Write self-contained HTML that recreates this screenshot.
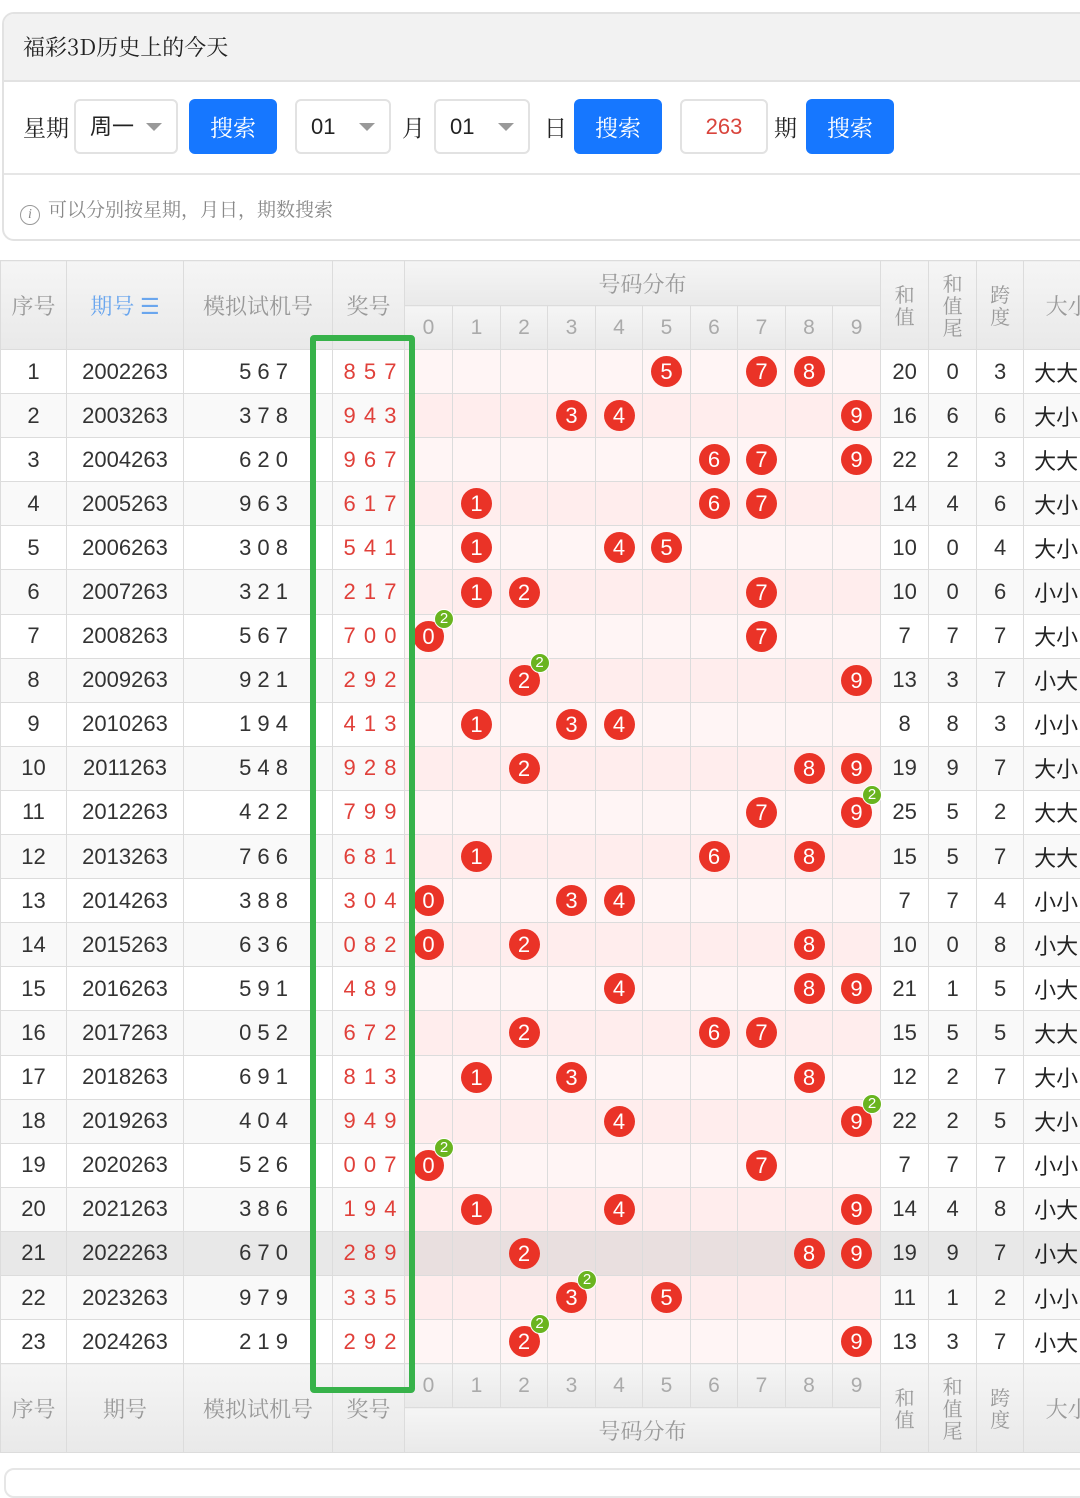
<!DOCTYPE html>
<html><head><meta charset="utf-8"><style>
*{box-sizing:border-box;margin:0;padding:0}
body{width:1080px;height:1480px;overflow:hidden;background:#fff;font-family:"Liberation Sans","Noto Sans CJK SC",sans-serif;position:relative}
.card{position:absolute;left:2px;top:12px;width:1100px;height:229px;border:2px solid #e2e2e2;border-radius:12px;overflow:hidden}
.ch{height:68px;background:#f2f2f2;border-bottom:2px solid #e2e2e2;font:22px "Noto Serif CJK SC",serif;color:#222;padding:17px 0 0 19px}
.ctl{height:93px;border-bottom:2px solid #e6e6e6;position:relative}
.ctl>*{position:absolute;top:17px;height:55px}
.lab{font:23px "Noto Serif CJK SC",serif;color:#222;line-height:55px}
.sel{border:2px solid #e2e2e2;border-radius:6px;font-size:22px;color:#222;line-height:51px;padding-left:14px}
.sel.ar:after{content:"";position:absolute;right:14px;top:22px;border:8px solid transparent;border-top:8px solid #999;border-bottom:0}
.btn{background:#1677ff;border-radius:6px;color:#fff;font:23px "Noto Serif CJK SC",serif;text-align:center;line-height:55px}
.hint{padding:20px 0 0 16px;font:19px "Noto Serif CJK SC",serif;color:#888}
.hint i{display:inline-block;width:20px;height:20px;border:1.5px solid #999;border-radius:50%;font:italic 14px "Liberation Serif",serif;text-align:center;line-height:17px;margin-right:8px;vertical-align:-2px}
table{position:absolute;left:0;top:260px;border-collapse:collapse;table-layout:fixed;width:1110px}
td,th{border:1px solid #dcdcdc;text-align:center;padding:0;font-weight:normal;white-space:nowrap;overflow:visible}
th{background:linear-gradient(#f5f5f5,#e9e9e9);color:#999;font:22px "Noto Serif CJK SC",serif}
th.d{font:21px "Liberation Sans",sans-serif;color:#aaa;height:44px}
th.v{font-size:20px;line-height:22px}
tbody td{height:44.1px;font-size:22px;color:#333}
tbody tr:nth-child(odd) td{background:#fff}
tbody tr:nth-child(even) td{background:#f9f9f9}
tbody tr:nth-child(odd) td.p{background:#fff5f5}
tbody tr:nth-child(even) td.p{background:#ffeded}
tbody tr.hl td{background:#e8e8e8!important}
tbody tr.hl td.p{background:#e9dfdf!important}
td.r{color:#e0403a;letter-spacing:1px;padding-left:4px}
td.s{letter-spacing:0;text-align:right;padding-right:44px}
td.b{font-family:"Noto Sans CJK SC",sans-serif;color:#222;text-align:left;padding-left:10px}
.ball{display:inline-block;position:relative;width:31px;height:31px;border-radius:50%;background:#ea3327;color:#fff;font-size:22px;line-height:31px;vertical-align:middle}
.ball b{position:absolute;right:-10px;top:-12px;width:20px;height:20px;border-radius:50%;background:#6ab41f;color:#fff;font-size:15px;line-height:18px;font-weight:normal;border:1px solid #fff}
.gb{position:absolute;left:310px;top:335px;width:105px;height:1058px;border:6px solid #37b24a;border-radius:4px}
.bot{position:absolute;left:4px;top:1468px;width:1100px;height:30px;border:2px solid #e6e6e6;border-radius:10px}
</style></head><body>
<div class="card">
<div class="ch">福彩3D历史上的今天</div>
<div class="ctl">
<span class="lab" style="left:19px">星期</span>
<div class="sel ar" style="left:70px;width:104px">周一</div>
<div class="btn" style="left:185px;width:88px">搜索</div>
<div class="sel ar" style="left:291px;width:96px">01</div>
<span class="lab" style="left:398px">月</span>
<div class="sel ar" style="left:430px;width:96px">01</div>
<span class="lab" style="left:540px">日</span>
<div class="btn" style="left:570px;width:88px">搜索</div>
<div class="sel" style="left:676px;width:88px;color:#d9443c;text-align:center;padding:0">263</div>
<span class="lab" style="left:770px">期</span>
<div class="btn" style="left:802px;width:88px">搜索</div>
</div>
<div class="hint"><i>i</i>可以分别按星期，月日，期数搜索</div>
</div>

<table>
<colgroup><col style="width:66px"><col style="width:117px"><col style="width:149px"><col style="width:72px"><col style="width:48px"><col style="width:48px"><col style="width:47px"><col style="width:48px"><col style="width:47px"><col style="width:48px"><col style="width:47px"><col style="width:48px"><col style="width:47px"><col style="width:48px"><col style="width:48px"><col style="width:48px"><col style="width:47px"><col style="width:88px"></colgroup>
<thead>
<tr style="height:45px"><th rowspan="2">序号</th><th rowspan="2" style="color:#6aa6ee">期号 ☰</th><th rowspan="2">模拟试机号</th><th rowspan="2">奖号</th><th colspan="10">号码分布</th><th rowspan="2" class="v">和<br>值</th><th rowspan="2" class="v">和<br>值<br>尾</th><th rowspan="2" class="v">跨<br>度</th><th rowspan="2">大小</th></tr>
<tr><th class="d">0</th><th class="d">1</th><th class="d">2</th><th class="d">3</th><th class="d">4</th><th class="d">5</th><th class="d">6</th><th class="d">7</th><th class="d">8</th><th class="d">9</th></tr>
</thead>
<tbody>
<tr><td>1</td><td>2002263</td><td class="s">5 6 7</td><td class="r">8 5 7</td><td class="p"></td><td class="p"></td><td class="p"></td><td class="p"></td><td class="p"></td><td class="p"><span class="ball">5</span></td><td class="p"></td><td class="p"><span class="ball">7</span></td><td class="p"><span class="ball">8</span></td><td class="p"></td><td>20</td><td>0</td><td>3</td><td class="b">大大</td></tr>
<tr><td>2</td><td>2003263</td><td class="s">3 7 8</td><td class="r">9 4 3</td><td class="p"></td><td class="p"></td><td class="p"></td><td class="p"><span class="ball">3</span></td><td class="p"><span class="ball">4</span></td><td class="p"></td><td class="p"></td><td class="p"></td><td class="p"></td><td class="p"><span class="ball">9</span></td><td>16</td><td>6</td><td>6</td><td class="b">大小</td></tr>
<tr><td>3</td><td>2004263</td><td class="s">6 2 0</td><td class="r">9 6 7</td><td class="p"></td><td class="p"></td><td class="p"></td><td class="p"></td><td class="p"></td><td class="p"></td><td class="p"><span class="ball">6</span></td><td class="p"><span class="ball">7</span></td><td class="p"></td><td class="p"><span class="ball">9</span></td><td>22</td><td>2</td><td>3</td><td class="b">大大</td></tr>
<tr><td>4</td><td>2005263</td><td class="s">9 6 3</td><td class="r">6 1 7</td><td class="p"></td><td class="p"><span class="ball">1</span></td><td class="p"></td><td class="p"></td><td class="p"></td><td class="p"></td><td class="p"><span class="ball">6</span></td><td class="p"><span class="ball">7</span></td><td class="p"></td><td class="p"></td><td>14</td><td>4</td><td>6</td><td class="b">大小</td></tr>
<tr><td>5</td><td>2006263</td><td class="s">3 0 8</td><td class="r">5 4 1</td><td class="p"></td><td class="p"><span class="ball">1</span></td><td class="p"></td><td class="p"></td><td class="p"><span class="ball">4</span></td><td class="p"><span class="ball">5</span></td><td class="p"></td><td class="p"></td><td class="p"></td><td class="p"></td><td>10</td><td>0</td><td>4</td><td class="b">大小</td></tr>
<tr><td>6</td><td>2007263</td><td class="s">3 2 1</td><td class="r">2 1 7</td><td class="p"></td><td class="p"><span class="ball">1</span></td><td class="p"><span class="ball">2</span></td><td class="p"></td><td class="p"></td><td class="p"></td><td class="p"></td><td class="p"><span class="ball">7</span></td><td class="p"></td><td class="p"></td><td>10</td><td>0</td><td>6</td><td class="b">小小</td></tr>
<tr><td>7</td><td>2008263</td><td class="s">5 6 7</td><td class="r">7 0 0</td><td class="p"><span class="ball">0<b>2</b></span></td><td class="p"></td><td class="p"></td><td class="p"></td><td class="p"></td><td class="p"></td><td class="p"></td><td class="p"><span class="ball">7</span></td><td class="p"></td><td class="p"></td><td>7</td><td>7</td><td>7</td><td class="b">大小</td></tr>
<tr><td>8</td><td>2009263</td><td class="s">9 2 1</td><td class="r">2 9 2</td><td class="p"></td><td class="p"></td><td class="p"><span class="ball">2<b>2</b></span></td><td class="p"></td><td class="p"></td><td class="p"></td><td class="p"></td><td class="p"></td><td class="p"></td><td class="p"><span class="ball">9</span></td><td>13</td><td>3</td><td>7</td><td class="b">小大</td></tr>
<tr><td>9</td><td>2010263</td><td class="s">1 9 4</td><td class="r">4 1 3</td><td class="p"></td><td class="p"><span class="ball">1</span></td><td class="p"></td><td class="p"><span class="ball">3</span></td><td class="p"><span class="ball">4</span></td><td class="p"></td><td class="p"></td><td class="p"></td><td class="p"></td><td class="p"></td><td>8</td><td>8</td><td>3</td><td class="b">小小</td></tr>
<tr><td>10</td><td>2011263</td><td class="s">5 4 8</td><td class="r">9 2 8</td><td class="p"></td><td class="p"></td><td class="p"><span class="ball">2</span></td><td class="p"></td><td class="p"></td><td class="p"></td><td class="p"></td><td class="p"></td><td class="p"><span class="ball">8</span></td><td class="p"><span class="ball">9</span></td><td>19</td><td>9</td><td>7</td><td class="b">大小</td></tr>
<tr><td>11</td><td>2012263</td><td class="s">4 2 2</td><td class="r">7 9 9</td><td class="p"></td><td class="p"></td><td class="p"></td><td class="p"></td><td class="p"></td><td class="p"></td><td class="p"></td><td class="p"><span class="ball">7</span></td><td class="p"></td><td class="p"><span class="ball">9<b>2</b></span></td><td>25</td><td>5</td><td>2</td><td class="b">大大</td></tr>
<tr><td>12</td><td>2013263</td><td class="s">7 6 6</td><td class="r">6 8 1</td><td class="p"></td><td class="p"><span class="ball">1</span></td><td class="p"></td><td class="p"></td><td class="p"></td><td class="p"></td><td class="p"><span class="ball">6</span></td><td class="p"></td><td class="p"><span class="ball">8</span></td><td class="p"></td><td>15</td><td>5</td><td>7</td><td class="b">大大</td></tr>
<tr><td>13</td><td>2014263</td><td class="s">3 8 8</td><td class="r">3 0 4</td><td class="p"><span class="ball">0</span></td><td class="p"></td><td class="p"></td><td class="p"><span class="ball">3</span></td><td class="p"><span class="ball">4</span></td><td class="p"></td><td class="p"></td><td class="p"></td><td class="p"></td><td class="p"></td><td>7</td><td>7</td><td>4</td><td class="b">小小</td></tr>
<tr><td>14</td><td>2015263</td><td class="s">6 3 6</td><td class="r">0 8 2</td><td class="p"><span class="ball">0</span></td><td class="p"></td><td class="p"><span class="ball">2</span></td><td class="p"></td><td class="p"></td><td class="p"></td><td class="p"></td><td class="p"></td><td class="p"><span class="ball">8</span></td><td class="p"></td><td>10</td><td>0</td><td>8</td><td class="b">小大</td></tr>
<tr><td>15</td><td>2016263</td><td class="s">5 9 1</td><td class="r">4 8 9</td><td class="p"></td><td class="p"></td><td class="p"></td><td class="p"></td><td class="p"><span class="ball">4</span></td><td class="p"></td><td class="p"></td><td class="p"></td><td class="p"><span class="ball">8</span></td><td class="p"><span class="ball">9</span></td><td>21</td><td>1</td><td>5</td><td class="b">小大</td></tr>
<tr><td>16</td><td>2017263</td><td class="s">0 5 2</td><td class="r">6 7 2</td><td class="p"></td><td class="p"></td><td class="p"><span class="ball">2</span></td><td class="p"></td><td class="p"></td><td class="p"></td><td class="p"><span class="ball">6</span></td><td class="p"><span class="ball">7</span></td><td class="p"></td><td class="p"></td><td>15</td><td>5</td><td>5</td><td class="b">大大</td></tr>
<tr><td>17</td><td>2018263</td><td class="s">6 9 1</td><td class="r">8 1 3</td><td class="p"></td><td class="p"><span class="ball">1</span></td><td class="p"></td><td class="p"><span class="ball">3</span></td><td class="p"></td><td class="p"></td><td class="p"></td><td class="p"></td><td class="p"><span class="ball">8</span></td><td class="p"></td><td>12</td><td>2</td><td>7</td><td class="b">大小</td></tr>
<tr><td>18</td><td>2019263</td><td class="s">4 0 4</td><td class="r">9 4 9</td><td class="p"></td><td class="p"></td><td class="p"></td><td class="p"></td><td class="p"><span class="ball">4</span></td><td class="p"></td><td class="p"></td><td class="p"></td><td class="p"></td><td class="p"><span class="ball">9<b>2</b></span></td><td>22</td><td>2</td><td>5</td><td class="b">大小</td></tr>
<tr><td>19</td><td>2020263</td><td class="s">5 2 6</td><td class="r">0 0 7</td><td class="p"><span class="ball">0<b>2</b></span></td><td class="p"></td><td class="p"></td><td class="p"></td><td class="p"></td><td class="p"></td><td class="p"></td><td class="p"><span class="ball">7</span></td><td class="p"></td><td class="p"></td><td>7</td><td>7</td><td>7</td><td class="b">小小</td></tr>
<tr><td>20</td><td>2021263</td><td class="s">3 8 6</td><td class="r">1 9 4</td><td class="p"></td><td class="p"><span class="ball">1</span></td><td class="p"></td><td class="p"></td><td class="p"><span class="ball">4</span></td><td class="p"></td><td class="p"></td><td class="p"></td><td class="p"></td><td class="p"><span class="ball">9</span></td><td>14</td><td>4</td><td>8</td><td class="b">小大</td></tr>
<tr class="hl"><td>21</td><td>2022263</td><td class="s">6 7 0</td><td class="r">2 8 9</td><td class="p"></td><td class="p"></td><td class="p"><span class="ball">2</span></td><td class="p"></td><td class="p"></td><td class="p"></td><td class="p"></td><td class="p"></td><td class="p"><span class="ball">8</span></td><td class="p"><span class="ball">9</span></td><td>19</td><td>9</td><td>7</td><td class="b">小大</td></tr>
<tr><td>22</td><td>2023263</td><td class="s">9 7 9</td><td class="r">3 3 5</td><td class="p"></td><td class="p"></td><td class="p"></td><td class="p"><span class="ball">3<b>2</b></span></td><td class="p"></td><td class="p"><span class="ball">5</span></td><td class="p"></td><td class="p"></td><td class="p"></td><td class="p"></td><td>11</td><td>1</td><td>2</td><td class="b">小小</td></tr>
<tr><td>23</td><td>2024263</td><td class="s">2 1 9</td><td class="r">2 9 2</td><td class="p"></td><td class="p"></td><td class="p"><span class="ball">2<b>2</b></span></td><td class="p"></td><td class="p"></td><td class="p"></td><td class="p"></td><td class="p"></td><td class="p"></td><td class="p"><span class="ball">9</span></td><td>13</td><td>3</td><td>7</td><td class="b">小大</td></tr>
</tbody>
<tfoot>
<tr><th rowspan="2">序号</th><th rowspan="2">期号</th><th rowspan="2">模拟试机号</th><th rowspan="2">奖号</th><th class="d">0</th><th class="d">1</th><th class="d">2</th><th class="d">3</th><th class="d">4</th><th class="d">5</th><th class="d">6</th><th class="d">7</th><th class="d">8</th><th class="d">9</th><th rowspan="2" class="v">和<br>值</th><th rowspan="2" class="v">和<br>值<br>尾</th><th rowspan="2" class="v">跨<br>度</th><th rowspan="2">大小</th></tr>
<tr style="height:45px"><th colspan="10">号码分布</th></tr>
</tfoot>
</table>
<div class="gb"></div>
<div class="bot"></div>
</body></html>
